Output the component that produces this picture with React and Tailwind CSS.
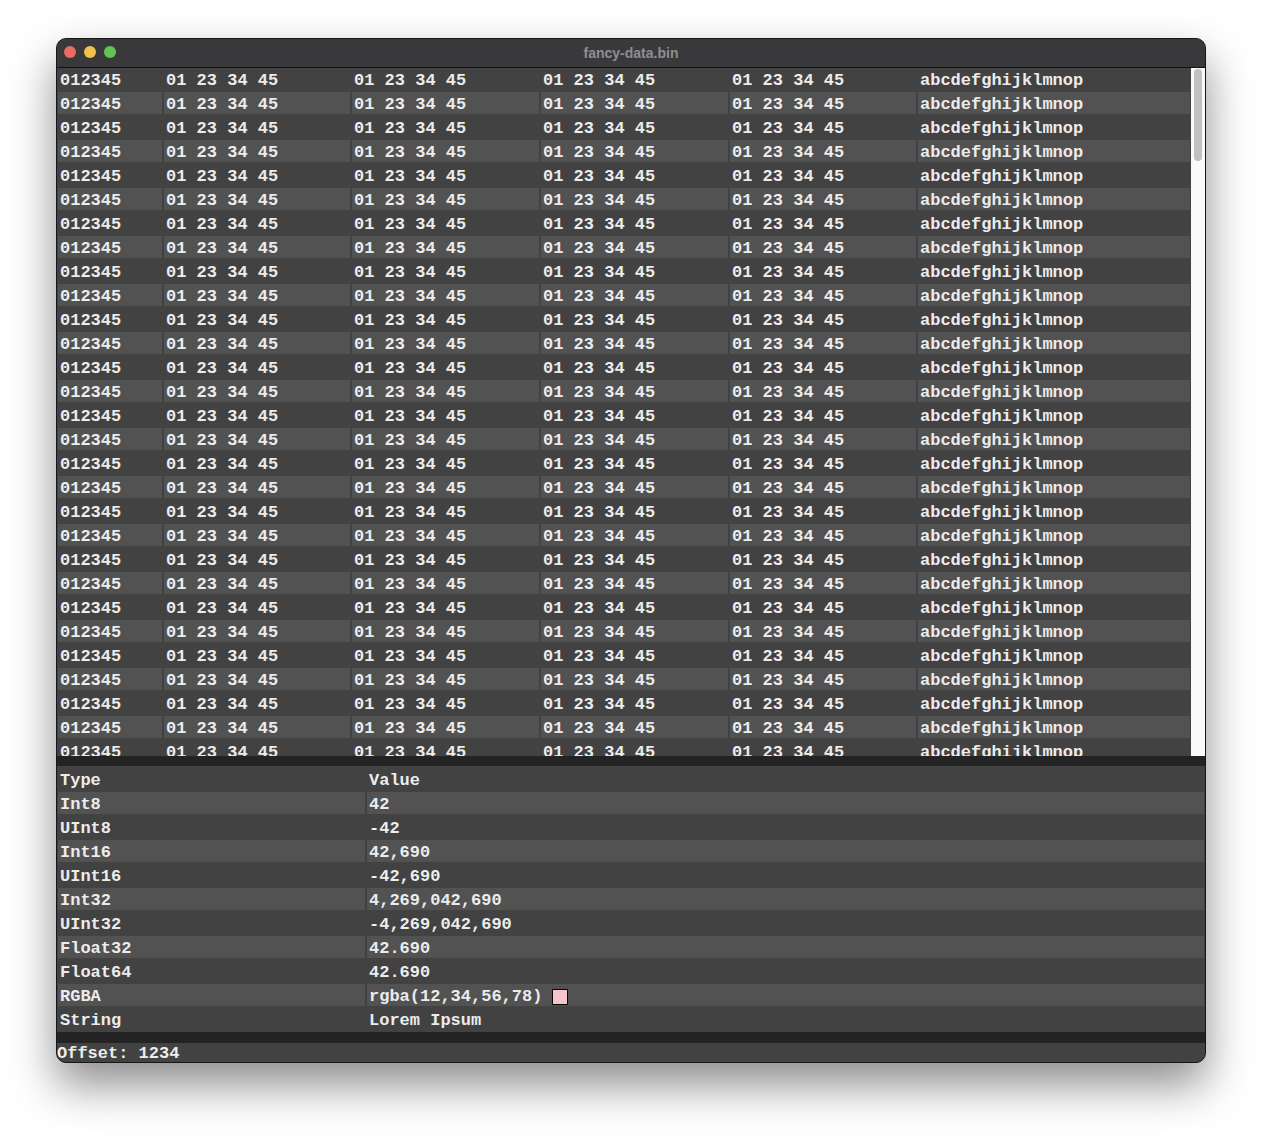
const HEX_COLS = ['01 23 34 45', '01 23 34 45', '01 23 34 45', '01 23 34 45'];

const INSPECTOR = [
  { type: 'Int8', value: '42' },
  { type: 'UInt8', value: '-42' },
  { type: 'Int16', value: '42,690' },
  { type: 'UInt16', value: '-42,690' },
  { type: 'Int32', value: '4,269,042,690' },
  { type: 'UInt32', value: '-4,269,042,690' },
  { type: 'Float32', value: '42.690' },
  { type: 'Float64', value: '42.690' },
  { type: 'RGBA', value: 'rgba(12,34,56,78)', swatch: true },
  { type: 'String', value: 'Lorem Ipsum' },
];

const mono = { fontFamily: '"Liberation Mono", "Courier New", monospace' };

// one cell of either table, text sits a little low like the original
const cell = 'h-[22px] pl-[2px] pt-[3px] leading-[19px] whitespace-pre';

const HexRow = ({ idx }) => {
  const shade = idx % 2 === 1 ? 'bg-[#525252]' : '';
  const cells = ['012345', ...HEX_COLS, 'abcdefghijklmnop'];
  return (
    <>
      {cells.map((c, i) => (
        <div key={i} className={`${cell} ${shade}`}>
          {c}
        </div>
      ))}
    </>
  );
};

export default function App() {
  const rows = Array.from({ length: 30 }, (_, i) => i);

  return (
    <div className="min-h-screen bg-white pl-[56px] pt-[38px]">
      <div
        className="w-[1150px] h-[1025px] rounded-[10px] border border-[#161616] bg-[#424242] overflow-hidden flex flex-col shadow-[0_22px_45px_rgba(0,0,0,0.45)] text-[17px] font-bold text-[#ececec]"
        style={mono}
      >
        {/* title bar */}
        <div className="h-[29px] shrink-0 bg-[#39393b] border-b border-[#111] relative flex items-center justify-center">
          <div className="absolute left-[7px] top-[7px] flex gap-[8px]">
            <span className="w-[12px] h-[12px] rounded-full bg-[#ed6a5e]" />
            <span className="w-[12px] h-[12px] rounded-full bg-[#f5bf4f]" />
            <span className="w-[12px] h-[12px] rounded-full bg-[#61c554]" />
          </div>
          <span className="text-[14px] font-bold text-[#8e8e90]" style={{ fontFamily: '"Liberation Sans", Arial, sans-serif' }}>
            fancy-data.bin
          </span>
        </div>

        {/* hex view */}
        <div className="h-[688px] shrink-0 flex">
          <div className="flex-1 overflow-hidden pl-[1px] pr-[1px]">
            <div className="grid grid-cols-[104px_186px_187px_187px_186px_1fr] gap-x-[2px] gap-y-[2px]">
              {rows.map((i) => (
                <HexRow key={i} idx={i} />
              ))}
            </div>
          </div>
          <div className="w-[14px] bg-[#fafafa] pt-[1px] flex justify-center">
            <div className="w-[8px] h-[92px] rounded-full bg-[#c1c1c1]" />
          </div>
        </div>

        <div className="h-[10px] shrink-0 bg-[#232323]" />

        {/* data inspector */}
        <div className="shrink-0 px-[1px] pt-[2px] pb-[2px] grid grid-cols-[307px_1fr] gap-x-[2px] gap-y-[2px]">
          <div className={cell}>Type</div>
          <div className={cell}>Value</div>
          {INSPECTOR.map((r, i) => {
            const shade = i % 2 === 0 ? 'bg-[#525252]' : '';
            return (
              <div key={r.type} className="contents">
                <div className={`${cell} ${shade}`}>{r.type}</div>
                <div className={`${cell} flex items-start gap-[10px] ${shade}`}>
                  <span>{r.value}</span>
                  {r.swatch && <span className="mt-[2px] w-[16px] h-[16px] border border-black bg-[#f6c5cc]" />}
                </div>
              </div>
            );
          })}
        </div>

        <div className="h-[11px] shrink-0 bg-[#232323]" />

        {/* status bar */}
        <div className="flex-1 pt-[2px] leading-[18px] whitespace-pre">Offset: 1234</div>
      </div>
    </div>
  );
}
